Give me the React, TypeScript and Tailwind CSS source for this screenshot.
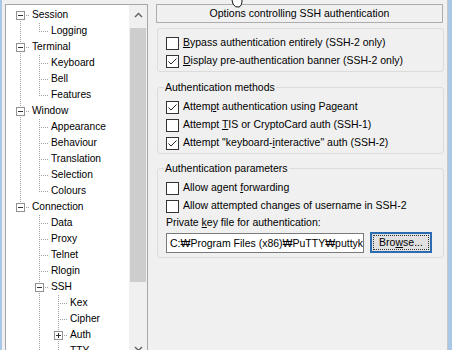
import React from "react"

type Node = { level: number; text: string; exp?: "-" | "+" }

const NODES: Node[] = [
  { level: 0, text: "Session", exp: "-" },
  { level: 1, text: "Logging" },
  { level: 0, text: "Terminal", exp: "-" },
  { level: 1, text: "Keyboard" },
  { level: 1, text: "Bell" },
  { level: 1, text: "Features" },
  { level: 0, text: "Window", exp: "-" },
  { level: 1, text: "Appearance" },
  { level: 1, text: "Behaviour" },
  { level: 1, text: "Translation" },
  { level: 1, text: "Selection" },
  { level: 1, text: "Colours" },
  { level: 0, text: "Connection", exp: "-" },
  { level: 1, text: "Data" },
  { level: 1, text: "Proxy" },
  { level: 1, text: "Telnet" },
  { level: 1, text: "Rlogin" },
  { level: 1, text: "SSH", exp: "-" },
  { level: 2, text: "Kex" },
  { level: 2, text: "Cipher" },
  { level: 2, text: "Auth", exp: "+" },
  { level: 2, text: "TTY" },
  { level: 2, text: "X11" },
  { level: 2, text: "Tunnels" },
  { level: 1, text: "Serial" },
]

// is there a later sibling at this level before the branch closes
function hasLater(idx: number, level: number) {
  for (let j = idx + 1; j < NODES.length; j++) {
    if (NODES[j].level < level) return false
    if (NODES[j].level === level) return true
  }
  return false
}

const cx = (level: number) => 14 + level * 19

function TreeRow({ node, idx }: { node: Node; idx: number }) {
  const c = cx(node.level)
  const w = c + 12
  const lines: React.ReactNode[] = []
  for (let i = 0; i < node.level; i++) {
    if (hasLater(idx, i)) {
      lines.push(<line key={"a" + i} x1={cx(i) + 0.5} y1={0} x2={cx(i) + 0.5} y2={16} />)
    }
  }
  if (idx > 0) lines.push(<line key="top" x1={c + 0.5} y1={0} x2={c + 0.5} y2={8} />)
  if (hasLater(idx, node.level)) lines.push(<line key="bot" x1={c + 0.5} y1={8} x2={c + 0.5} y2={16} />)
  lines.push(<line key="h" x1={c} y1={8.5} x2={c + 10} y2={8.5} />)

  return (
    <div className="flex h-[16px] items-center whitespace-nowrap">
      <svg width={w} height={16} className="shrink-0">
        <g stroke="#a0a0a0" strokeWidth={1} strokeDasharray="1 1">
          {lines}
        </g>
        {node.exp ? (
          <g>
            <rect x={c - 3.5} y={4.5} width={8} height={8} fill="#fff" stroke="#919191" />
            <line x1={c - 2} y1={8.5} x2={c + 3} y2={8.5} stroke="#333" />
            {node.exp === "+" ? <line x1={c + 0.5} y1={6} x2={c + 0.5} y2={11} stroke="#333" /> : null}
          </g>
        ) : null}
      </svg>
      <span className="leading-[16px] text-black">{node.text}</span>
    </div>
  )
}

function Checkbox({ checked, children }: { checked?: boolean; children: React.ReactNode }) {
  return (
    <div className="flex h-[18px] items-center">
      <span className="flex h-[13px] w-[13px] shrink-0 items-center justify-center border border-[#333333] bg-white">
        {checked ? (
          <svg width={11} height={11} viewBox="0 0 11 11">
            <path d="M1.5 5.5 L4 8 L9.5 2.5" fill="none" stroke="#222" strokeWidth={1} />
          </svg>
        ) : null}
      </span>
      <span className="ml-[4px] whitespace-nowrap">{children}</span>
    </div>
  )
}

export default function App() {
  return (
    <div className="relative flex h-[350px] w-[452px] overflow-hidden bg-[#f0f0f0] font-['Liberation_Sans',Arial,sans-serif] text-[10.2px] text-black">
      <div className="w-[2px] shrink-0 bg-[#a9c8e8]" />

      {/* category tree */}
      <div className="flex w-[146px] shrink-0 flex-col pl-[3px]">
        <div className="mt-[-16px] h-[16px] pl-[2px] leading-[16px]">Category:</div>
        <div className="mt-[4px] flex h-[356px] border border-[#a6a6a6] bg-white">
          <div className="flex-1 overflow-hidden pt-[2px]">
            {NODES.map((n, i) => (
              <TreeRow key={n.text} node={n} idx={i} />
            ))}
          </div>
          <div className="flex w-[18px] shrink-0 flex-col bg-[#f0f0f0]">
            <div className="flex h-[20px] items-center justify-center">
              <svg width={9} height={6}>
                <path d="M1 5 L4.5 1.5 L8 5" fill="none" stroke="#606060" strokeWidth={1.4} />
              </svg>
            </div>
            <div className="mx-[1px] mt-[3px] h-[254px] bg-[#cdcdcd]" />
            <div className="flex-1" />
            <div className="flex h-[20px] items-center justify-center">
              <svg width={9} height={6}>
                <path d="M1 1 L4.5 4.5 L8 1" fill="none" stroke="#606060" strokeWidth={1.4} />
              </svg>
            </div>
          </div>
        </div>
      </div>

      {/* options panel */}
      <div className="ml-[8px] flex w-[288px] shrink-0 flex-col text-[10.5px]">
        <div className="mt-[4px] flex h-[19px] w-[287px] items-center justify-center border border-[#adadad] bg-[#f0f0f0]">
          Options controlling SSH authentication
        </div>

        <div className="ml-[1px] mt-[5px] rounded-[3px] border border-[#dcdcdc] pb-[1px] pl-[8px] pt-[5px]">
          <Checkbox>
            <u>B</u>ypass authentication entirely (SSH-2 only)
          </Checkbox>
          <Checkbox checked>
            <u>D</u>isplay pre-authentication banner (SSH-2 only)
          </Checkbox>
        </div>

        <fieldset className="ml-[1px] mt-[7px] rounded-[3px] border border-[#dcdcdc] pb-[1px] pl-[8px]">
          <legend className="ml-[-2px] px-[1px] leading-[16px]">Authentication methods</legend>
          <div className="pt-[3px]">
            <Checkbox checked>
              Attem<u>p</u>t authentication using Pageant
            </Checkbox>
            <Checkbox>
              Attempt <u>T</u>IS or CryptoCard auth (SSH-1)
            </Checkbox>
            <Checkbox checked>
              Attempt "keyboard-<u>i</u>nteractive" auth (SSH-2)
            </Checkbox>
          </div>
        </fieldset>

        <fieldset className="ml-[1px] mt-[6px] rounded-[3px] border border-[#dcdcdc] pb-[4px] pl-[8px]">
          <legend className="ml-[-2px] px-[1px] leading-[16px]">Authentication parameters</legend>
          <div className="pt-[3px]">
            <Checkbox>
              Allow agent <u>f</u>orwarding
            </Checkbox>
            <Checkbox>Allow attempted changes of username in SSH-2</Checkbox>
            <div className="h-[16px] leading-[15px]">
              Private <u>k</u>ey file for authentication:
            </div>
            <div className="mt-[1px] flex h-[21px] items-center">
              <div className="h-[20px] w-[198px] overflow-hidden whitespace-nowrap border border-[#7a7a7a] bg-white pl-[3px] leading-[18px]">
                C:₩Program Files (x86)₩PuTTY₩puttyk
              </div>
              <button
                type="button"
                className="ml-[6px] flex h-[21px] w-[62px] items-center justify-center border-2 border-[#2b6cb0] bg-[#e1e1e1] p-[1px]">
                <span className="flex h-full w-full items-center justify-center border border-dotted border-[#333]">
                  Bro<u>w</u>se...
                </span>
              </button>
            </div>
          </div>
        </fieldset>
      </div>

      <div className="ml-[3px] w-[1px] shrink-0 bg-[#c8c8c8]" />
      <div className="w-[4px] shrink-0 bg-[#a9c8e8]" />

      {/* mouse pointer */}
      <svg className="absolute left-[229px] top-0" width={16} height={9}>
        <path d="M3 0 L4 4 Q6 8 10 7 Q13 6 13 0" fill="#fff" stroke="#111" strokeWidth={1} />
      </svg>
    </div>
  )
}
